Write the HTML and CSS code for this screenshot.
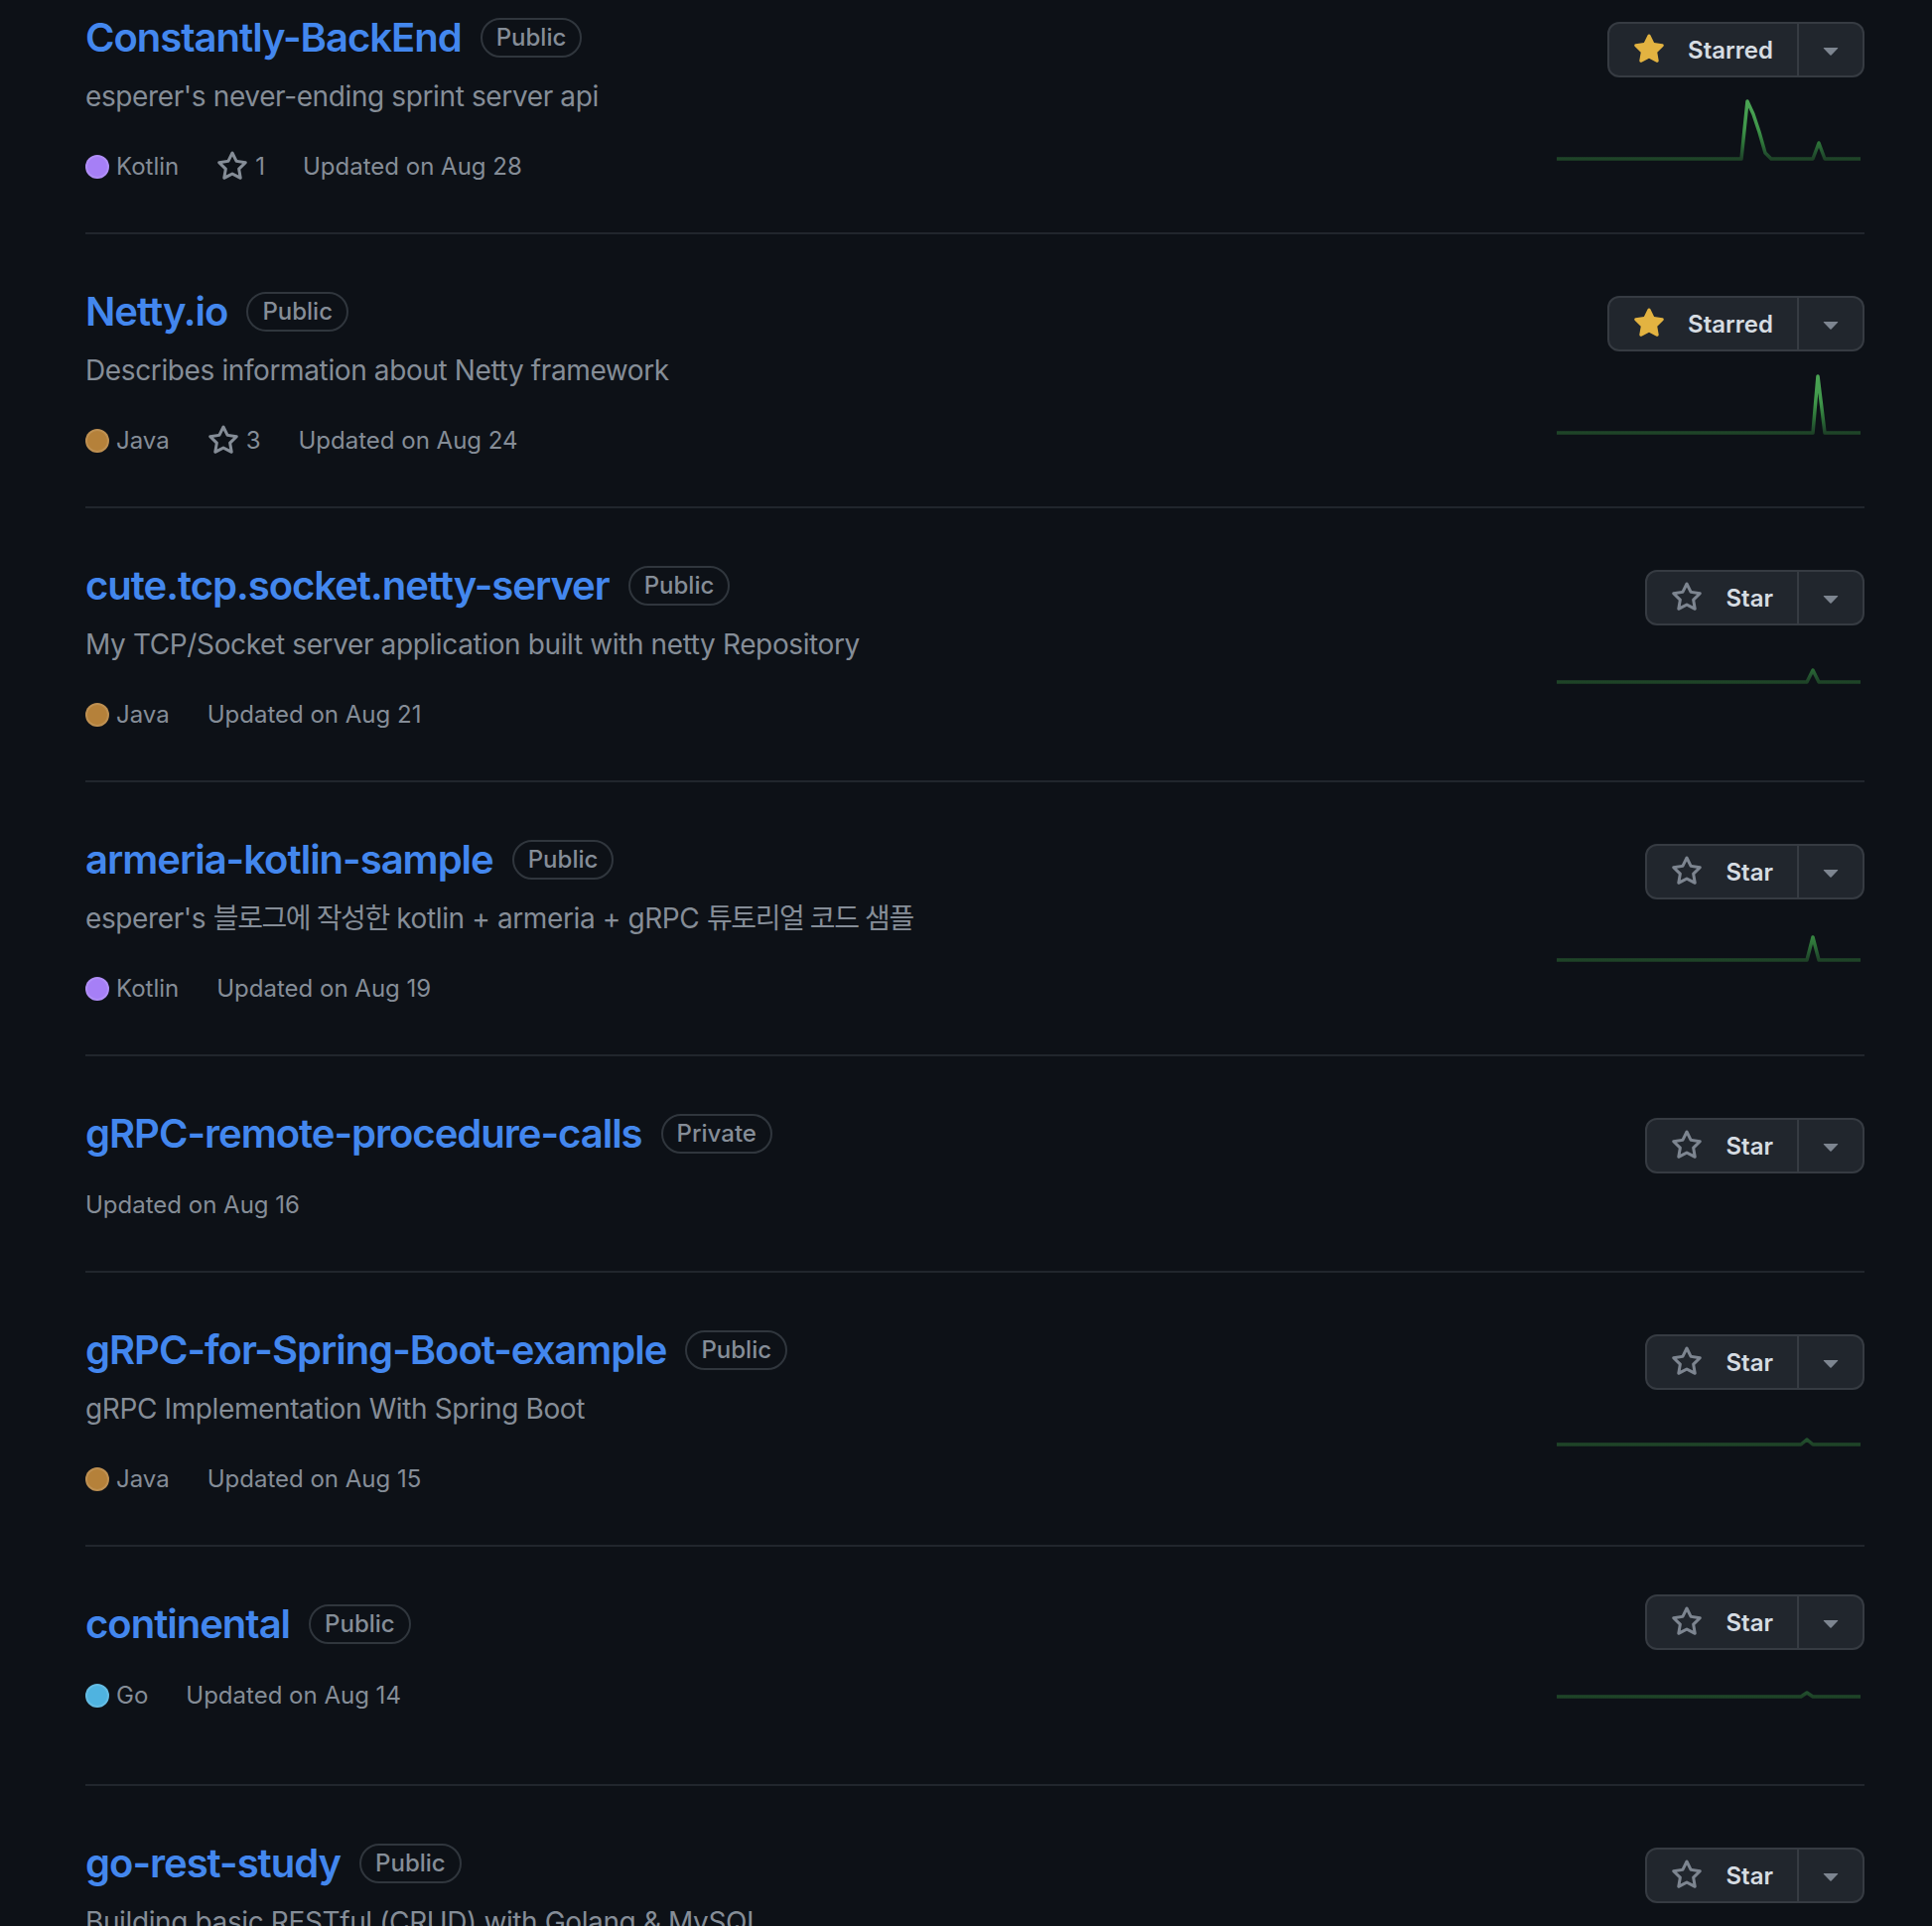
FILE: index.html
```html
<!DOCTYPE html>
<html lang="en">
<head>
<meta charset="utf-8">
<title>Repositories</title>
<link rel="stylesheet" href="styles.css">
</head>
<body>
<svg class="icon-defs" width="0" height="0" aria-hidden="true">
  <defs>
    <symbol id="i-star" viewBox="0 0 16 16"><path d="M8 .25a.75.75 0 0 1 .673.418l1.882 3.815 4.21.612a.75.75 0 0 1 .416 1.279l-3.046 2.97.719 4.192a.751.751 0 0 1-1.088.791L8 12.347l-3.766 1.98a.75.75 0 0 1-1.088-.79l.72-4.194L.818 6.374a.75.75 0 0 1 .416-1.28l4.21-.611L7.327.668A.75.75 0 0 1 8 .25Zm0 2.445L6.615 5.5a.75.75 0 0 1-.564.41l-3.097.45 2.24 2.184a.75.75 0 0 1 .216.664l-.528 3.084 2.769-1.456a.75.75 0 0 1 .698 0l2.77 1.456-.53-3.084a.75.75 0 0 1 .216-.664l2.24-2.183-3.096-.45a.75.75 0 0 1-.564-.41L8 2.694Z"/></symbol>
    <symbol id="i-star-fill" viewBox="0 0 16 16"><path d="M8 .25a.75.75 0 0 1 .673.418l1.882 3.815 4.21.612a.75.75 0 0 1 .416 1.279l-3.046 2.97.719 4.192a.751.751 0 0 1-1.088.791L8 12.347l-3.766 1.98a.75.75 0 0 1-1.088-.79l.72-4.194L.818 6.374a.75.75 0 0 1 .416-1.28l4.21-.611L7.327.668A.75.75 0 0 1 8 .25Z"/></symbol>
    <symbol id="i-caret" viewBox="0 0 16 16"><path d="m4.427 7.427 3.396 3.396a.25.25 0 0 0 .354 0l3.396-3.396A.25.25 0 0 0 11.396 7H4.604a.25.25 0 0 0-.177.427Z"/></symbol>
  </defs>
</svg>

<main class="page">
<ul class="repos">

  <li class="repo">
    <div class="repo-main">
      <h3 class="repo-title"><a class="repo-name" href="#">Constantly-BackEnd</a><span class="label">Public</span></h3>
      <p class="repo-desc">esperer's never-ending sprint server api</p>
      <div class="repo-meta">
        <span class="meta-item"><span class="lang-dot lang-kotlin"></span><span>Kotlin</span></span>
        <a class="meta-item meta-link" href="#"><svg class="meta-star"><use href="#i-star"/></svg><span>1</span></a>
        <span class="meta-item">Updated on Aug 28</span>
      </div>
    </div>
    <div class="repo-side">
      <div class="btn-group">
        <button class="btn btn-main"><svg class="btn-icon is-starred"><use href="#i-star-fill"/></svg><span>Starred</span></button>
        <button class="btn btn-caret"><svg class="caret-icon"><use href="#i-caret"/></svg></button>
      </div>
      <div class="spark">
        <svg width="310" height="87" viewBox="0 0 310 87">
          <defs><linearGradient id="sg1" gradientUnits="userSpaceOnUse" x1="0" y1="73" x2="0" y2="13"><stop offset="0" stop-color="#1e4327"/><stop offset="0.1" stop-color="#235330"/><stop offset="0.25" stop-color="#2c7037"/><stop offset="0.5" stop-color="#3f964a"/><stop offset="1" stop-color="#4ba655"/></linearGradient></defs>
          <path class="spark-line" stroke="url(#sg1)" d="M0,73 L186,73 L192,15 L198,28 L204,46 L210,67 L216,73 L258,73 L264,57 L270,73 L306,73"/>
        </svg>
      </div>
    </div>
  </li>

  <li class="repo">
    <div class="repo-main">
      <h3 class="repo-title"><a class="repo-name" href="#">Netty.io</a><span class="label">Public</span></h3>
      <p class="repo-desc">Describes information about Netty framework</p>
      <div class="repo-meta">
        <span class="meta-item"><span class="lang-dot lang-java"></span><span>Java</span></span>
        <a class="meta-item meta-link" href="#"><svg class="meta-star"><use href="#i-star"/></svg><span>3</span></a>
        <span class="meta-item">Updated on Aug 24</span>
      </div>
    </div>
    <div class="repo-side">
      <div class="btn-group">
        <button class="btn btn-main"><svg class="btn-icon is-starred"><use href="#i-star-fill"/></svg><span>Starred</span></button>
        <button class="btn btn-caret"><svg class="caret-icon"><use href="#i-caret"/></svg></button>
      </div>
      <div class="spark">
        <svg width="310" height="87" viewBox="0 0 310 87">
          <defs><linearGradient id="sg2" gradientUnits="userSpaceOnUse" x1="0" y1="73" x2="0" y2="13"><stop offset="0" stop-color="#1e4327"/><stop offset="0.1" stop-color="#235330"/><stop offset="0.25" stop-color="#2c7037"/><stop offset="0.5" stop-color="#3f964a"/><stop offset="1" stop-color="#4ba655"/></linearGradient></defs>
          <path class="spark-line" stroke="url(#sg2)" d="M0,73 L258,73 L263,16 L270,73 L306,73"/>
        </svg>
      </div>
    </div>
  </li>

  <li class="repo">
    <div class="repo-main">
      <h3 class="repo-title"><a class="repo-name" href="#">cute.tcp.socket.netty-server</a><span class="label">Public</span></h3>
      <p class="repo-desc">My TCP/Socket server application built with netty Repository</p>
      <div class="repo-meta">
        <span class="meta-item"><span class="lang-dot lang-java"></span><span>Java</span></span>
        <span class="meta-item">Updated on Aug 21</span>
      </div>
    </div>
    <div class="repo-side">
      <div class="btn-group">
        <button class="btn btn-main"><svg class="btn-icon"><use href="#i-star"/></svg><span>Star</span></button>
        <button class="btn btn-caret"><svg class="caret-icon"><use href="#i-caret"/></svg></button>
      </div>
      <div class="spark">
        <svg width="310" height="87" viewBox="0 0 310 87">
          <defs><linearGradient id="sg3" gradientUnits="userSpaceOnUse" x1="0" y1="48" x2="0" y2="-12"><stop offset="0" stop-color="#1e4327"/><stop offset="0.1" stop-color="#235330"/><stop offset="0.25" stop-color="#2c7037"/><stop offset="0.5" stop-color="#3f964a"/><stop offset="1" stop-color="#4ba655"/></linearGradient></defs>
          <path class="spark-line" stroke="url(#sg3)" d="M0,48 L252,48 L258,36 L264,48 L306,48"/>
        </svg>
      </div>
    </div>
  </li>

  <li class="repo">
    <div class="repo-main">
      <h3 class="repo-title"><a class="repo-name" href="#">armeria-kotlin-sample</a><span class="label">Public</span></h3>
      <p class="repo-desc">esperer's <span class="ko">블로그에 작성한</span> kotlin + armeria + gRPC <span class="ko">튜토리얼 코드 샘플</span></p>
      <div class="repo-meta">
        <span class="meta-item"><span class="lang-dot lang-kotlin"></span><span>Kotlin</span></span>
        <span class="meta-item">Updated on Aug 19</span>
      </div>
    </div>
    <div class="repo-side">
      <div class="btn-group">
        <button class="btn btn-main"><svg class="btn-icon"><use href="#i-star"/></svg><span>Star</span></button>
        <button class="btn btn-caret"><svg class="caret-icon"><use href="#i-caret"/></svg></button>
      </div>
      <div class="spark">
        <svg width="310" height="87" viewBox="0 0 310 87">
          <defs><linearGradient id="sg4" gradientUnits="userSpaceOnUse" x1="0" y1="52" x2="0" y2="-8"><stop offset="0" stop-color="#1e4327"/><stop offset="0.1" stop-color="#235330"/><stop offset="0.25" stop-color="#2c7037"/><stop offset="0.5" stop-color="#3f964a"/><stop offset="1" stop-color="#4ba655"/></linearGradient></defs>
          <path class="spark-line" stroke="url(#sg4)" d="M0,52 L252,52 L258,29 L264,52 L306,52"/>
        </svg>
      </div>
    </div>
  </li>

  <li class="repo">
    <div class="repo-main">
      <h3 class="repo-title"><a class="repo-name" href="#">gRPC-remote-procedure-calls</a><span class="label">Private</span></h3>
      <div class="repo-meta">
        <span class="meta-item">Updated on Aug 16</span>
      </div>
    </div>
    <div class="repo-side">
      <div class="btn-group">
        <button class="btn btn-main"><svg class="btn-icon"><use href="#i-star"/></svg><span>Star</span></button>
        <button class="btn btn-caret"><svg class="caret-icon"><use href="#i-caret"/></svg></button>
      </div>
      <div class="spark spark-empty"></div>
    </div>
  </li>

  <li class="repo">
    <div class="repo-main">
      <h3 class="repo-title"><a class="repo-name" href="#">gRPC-for-Spring-Boot-example</a><span class="label">Public</span></h3>
      <p class="repo-desc">gRPC Implementation With Spring Boot</p>
      <div class="repo-meta">
        <span class="meta-item"><span class="lang-dot lang-java"></span><span>Java</span></span>
        <span class="meta-item">Updated on Aug 15</span>
      </div>
    </div>
    <div class="repo-side">
      <div class="btn-group">
        <button class="btn btn-main"><svg class="btn-icon"><use href="#i-star"/></svg><span>Star</span></button>
        <button class="btn btn-caret"><svg class="caret-icon"><use href="#i-caret"/></svg></button>
      </div>
      <div class="spark">
        <svg width="310" height="87" viewBox="0 0 310 87">
          <defs><linearGradient id="sg6" gradientUnits="userSpaceOnUse" x1="0" y1="46" x2="0" y2="-14"><stop offset="0" stop-color="#1e4327"/><stop offset="0.1" stop-color="#235330"/><stop offset="0.25" stop-color="#2c7037"/><stop offset="0.5" stop-color="#3f964a"/><stop offset="1" stop-color="#4ba655"/></linearGradient></defs>
          <path class="spark-line" stroke="url(#sg6)" d="M0,46 L246,46 L252,41 L258,46 L306,46"/>
        </svg>
      </div>
    </div>
  </li>

  <li class="repo">
    <div class="repo-main">
      <h3 class="repo-title"><a class="repo-name" href="#">continental</a><span class="label">Public</span></h3>
      <div class="repo-meta">
        <span class="meta-item"><span class="lang-dot lang-go"></span><span>Go</span></span>
        <span class="meta-item">Updated on Aug 14</span>
      </div>
    </div>
    <div class="repo-side">
      <div class="btn-group">
        <button class="btn btn-main"><svg class="btn-icon"><use href="#i-star"/></svg><span>Star</span></button>
        <button class="btn btn-caret"><svg class="caret-icon"><use href="#i-caret"/></svg></button>
      </div>
      <div class="spark">
        <svg width="310" height="87" viewBox="0 0 310 87">
          <defs><linearGradient id="sg7" gradientUnits="userSpaceOnUse" x1="0" y1="47" x2="0" y2="-13"><stop offset="0" stop-color="#1e4327"/><stop offset="0.1" stop-color="#235330"/><stop offset="0.25" stop-color="#2c7037"/><stop offset="0.5" stop-color="#3f964a"/><stop offset="1" stop-color="#4ba655"/></linearGradient></defs>
          <path class="spark-line" stroke="url(#sg7)" d="M0,47 L246,47 L252,43 L258,47 L306,47"/>
        </svg>
      </div>
    </div>
  </li>

  <li class="repo">
    <div class="repo-main">
      <h3 class="repo-title"><a class="repo-name" href="#">go-rest-study</a><span class="label">Public</span></h3>
      <p class="repo-desc">Building basic RESTful (CRUD) with Golang &amp; MySQL</p>
      <div class="repo-meta">
        <span class="meta-item"><span class="lang-dot lang-go"></span><span>Go</span></span>
      </div>
    </div>
    <div class="repo-side">
      <div class="btn-group">
        <button class="btn btn-main"><svg class="btn-icon"><use href="#i-star"/></svg><span>Star</span></button>
        <button class="btn btn-caret"><svg class="caret-icon"><use href="#i-caret"/></svg></button>
      </div>
      <div class="spark"></div>
    </div>
  </li>

</ul>
</main>
</body>
</html>
```

FILE: styles.css
```css
html, body {
  margin: 0;
  padding: 0;
  background: #0d1117;
}

body {
  font-family: Inter, "Noto Sans CJK KR", "Noto Sans", sans-serif;
  color: #858d97;
  overflow: hidden;
  height: 1940px;
}

.icon-defs {
  position: absolute;
  width: 0;
  height: 0;
  overflow: hidden;
}

.page {
  width: 1792px;
  padding-left: 86px;
}

.repos {
  list-style: none;
  margin: -40px 0 0;
  padding: 0;
}

.repo {
  display: flex;
  padding: 48px 0;
  border-bottom: 2px solid #21262d;
}

.repo-main {
  display: flex;
  flex-direction: column;
  flex: 1;
  min-width: 0;
}

.repo-title {
  display: flex;
  align-items: center;
  height: 60px;
  margin: 0 0 8px;
  font-size: 40px;
  line-height: 60px;
  font-weight: 600;
  letter-spacing: -1px;
}

.repo-name {
  color: #4387ee;
  text-decoration: none;
}

.label {
  display: inline-flex;
  align-items: center;
  box-sizing: border-box;
  height: 40px;
  margin-left: 19px;
  padding: 0 14px;
  border: 2px solid #30363d;
  border-radius: 999px;
  font-size: 24px;
  font-weight: 500;
  line-height: 36px;
  letter-spacing: 0;
  color: #858d97;
}

.repo-desc {
  margin: 0 0 16px;
  font-size: 28px;
  line-height: 42px;
  letter-spacing: -0.38px;
  color: #858d97;
  white-space: nowrap;
}

.ko {
  letter-spacing: -1.4px;
}

.repo-meta {
  display: flex;
  align-items: center;
  margin-top: 16px;
  font-size: 24px;
  line-height: 36px;
  color: #858d97;
}

.meta-item {
  display: inline-flex;
  align-items: center;
  gap: 7px;
  margin-right: 38px;
}

.meta-link {
  color: #858d97;
  text-decoration: none;
}

.lang-dot {
  display: inline-block;
  box-sizing: border-box;
  width: 24px;
  height: 24px;
  border-radius: 50%;
  border: 2px solid rgba(255, 255, 255, 0.12);
}

.lang-kotlin { background: #a67ff6; }
.lang-java { background: #b5813a; }
.lang-go { background: #4fb3e0; }

.meta-star {
  width: 32px;
  height: 32px;
  fill: #858d97;
}

.repo-side {
  display: flex;
  flex-direction: column;
  align-items: flex-end;
  width: 312px;
  margin-left: 24px;
}

.repo-side::before {
  content: "";
  flex: 1.2 1 0;
}

.repo-side::after {
  content: "";
  flex: 1 1 0;
}

.btn-group {
  display: flex;
  flex: none;
}

.btn {
  display: flex;
  align-items: center;
  box-sizing: border-box;
  height: 56px;
  margin: 0;
  background: #21262d;
  border: 2px solid #363b42;
  color: #d6dce2;
  font-family: inherit;
  font-size: 24px;
  font-weight: 600;
  cursor: pointer;
}

.btn-main {
  gap: 23px;
  padding: 0 24px;
  border-radius: 12px 0 0 12px;
}

.btn-caret {
  justify-content: center;
  width: 66px;
  padding: 0;
  border-left: none;
  border-radius: 0 12px 12px 0;
}

.btn-icon {
  width: 32px;
  height: 32px;
  fill: #7d8590;
}

.btn-icon.is-starred {
  fill: #e3b341;
}

.caret-icon {
  width: 32px;
  height: 32px;
  fill: #7d8590;
}

.spark {
  display: flex;
  align-items: flex-end;
  flex: 0.8 0 87px;
}

.spark svg {
  display: block;
}

.spark-empty {
  flex: 0.8 0 28px;
}

.spark-line {
  fill: none;
  stroke-width: 3.5;
  stroke-linejoin: round;
}
```
